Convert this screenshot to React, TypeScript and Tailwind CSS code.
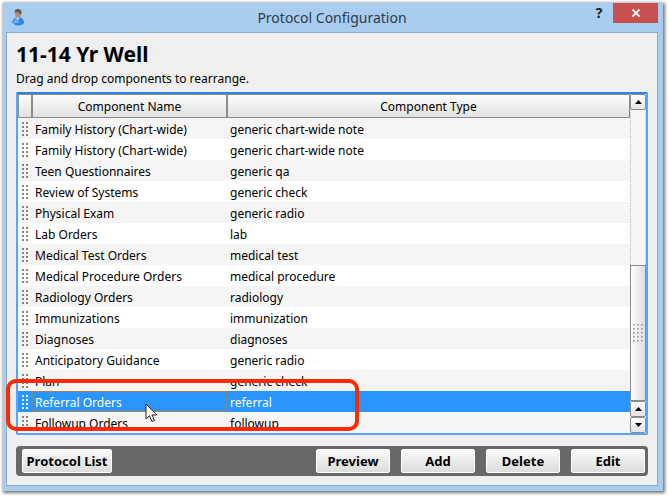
import React, { useState } from 'react';

interface ProtocolComponent {
  name: string;
  type: string;
}

const components: ProtocolComponent[] = [
  { name: 'Family History (Chart-wide)', type: 'generic chart-wide note' },
  { name: 'Family History (Chart-wide)', type: 'generic chart-wide note' },
  { name: 'Teen Questionnaires', type: 'generic qa' },
  { name: 'Review of Systems', type: 'generic check' },
  { name: 'Physical Exam', type: 'generic radio' },
  { name: 'Lab Orders', type: 'lab' },
  { name: 'Medical Test Orders', type: 'medical test' },
  { name: 'Medical Procedure Orders', type: 'medical procedure' },
  { name: 'Radiology Orders', type: 'radiology' },
  { name: 'Immunizations', type: 'immunization' },
  { name: 'Diagnoses', type: 'diagnoses' },
  { name: 'Anticipatory Guidance', type: 'generic radio' },
  { name: 'Plan', type: 'generic check' },
  { name: 'Referral Orders', type: 'referral' },
  { name: 'Followup Orders', type: 'followup' },
];

function UserIcon() {
  return (
    <svg width="15" height="17" viewBox="0 0 15 17" aria-hidden="true">
      <path d="M2 15 C2 11 4 9 8 8 C12 8 14 11 14 14 C13 16 9 17 5 16 Z" fill="#3484e0" />
      <path d="M3 14 C4 11 6 9 8 9 L9 14 Z" fill="#69b2f8" />
      <path d="M0 15 L3 14 L5 16 Z" fill="#b9d9f5" />
      <path d="M6 8 L10 8 L8 11 Z" fill="#dcebfa" />
      <ellipse cx="8" cy="5" rx="3" ry="4" fill="#b98f74" />
      <path d="M5 4 C4 1 6 0 8 0 C12 0 12 4 11 6 C10 4 8 3 6 3 Z" fill="#5f5c58" />
    </svg>
  );
}

function DragHandle({ selected }: { selected: boolean }) {
  return (
    <svg width="7" height="15" viewBox="0 0 7 15" className="mx-auto block" aria-hidden="true">
      {[0, 4, 8, 12].map(y =>
        [0, 4].map(x => (
          <rect key={`${x}-${y}`} x={x} y={y} width="2" height="2" fill={selected ? '#e8f3ff' : '#858578'} />
        ))
      )}
    </svg>
  );
}

function ScrollArrow({ down = false }: { down?: boolean }) {
  return (
    <button
      aria-label={down ? 'Scroll down' : 'Scroll up'}
      className="flex h-4 w-full shrink-0 items-center justify-center rounded-xs border border-[#8c8c8c] bg-linear-to-b from-white to-[#e4e4e4]"
    >
      <svg width="7" height="4" viewBox="0 0 7 4" aria-hidden="true">
        <path d={down ? 'M0 0 H7 L3.5 4 Z' : 'M0 4 H7 L3.5 0 Z'} fill="#000" />
      </svg>
    </button>
  );
}

function ScrollBar() {
  return (
    <div className="flex w-4 shrink-0 flex-col">
      <ScrollArrow />
      <div className="w-full flex-1 border-x border-dotted border-[#b8b8b8] bg-[#f5f5f5]" />
      <div className="flex h-[136px] w-full items-center justify-center border border-[#8c8c8c] bg-linear-to-r from-[#fdfdfd] to-[#dedede]">
        <svg width="11" height="18" viewBox="0 0 11 18" aria-hidden="true">
          {[0, 4, 8, 12, 16].map(y =>
            [0, 4, 8].map(x => <path key={`${x}-${y}`} d={`M${x} ${y} h2 v1 h-1 v1 h-1 z`} fill="#a8a8a8" />)
          )}
        </svg>
      </div>
      <ScrollArrow />
      <ScrollArrow down />
    </div>
  );
}

function BarButton({ children, wide = false }: { children: React.ReactNode; wide?: boolean }) {
  return (
    <button
      className={`h-6 rounded-xs border border-white bg-linear-to-b from-[#fafafa] to-[#dcdcdc] text-[13px] leading-5 font-bold ${
        wide ? 'w-[90px]' : 'w-[74px]'
      }`}
    >
      {children}
    </button>
  );
}

export default function App() {
  const [selected, setSelected] = useState(13);

  const headCell =
    'h-6 border border-[#8c8c8c] bg-linear-to-b from-[#fcfcfc] to-[#e2e2e2] p-0 pt-0.5 text-center font-normal';

  return (
    <div className="bg-white p-[3px] pr-[6px] pb-[6px] font-['Noto_Sans',sans-serif] text-xs leading-5 text-black">
      <div className="bg-[#a8cdf1] pr-[5px] pb-[5px] pl-[3px] shadow-[1px_1px_3px_1px_#777]">
        {/* Title bar */}
        <header className="flex h-[29px] items-start">
          <div className="flex w-20 pt-1.5 pl-1">
            <UserIcon />
          </div>
          <h1 className="flex-1 pt-[3px] text-center text-sm leading-6 text-[#2f3a48]">Protocol Configuration</h1>
          <div className="flex w-20 justify-end">
            <button aria-label="Help" className="h-5 w-7 text-sm font-bold text-[#1e1e1e]">
              ?
            </button>
            <button aria-label="Close" className="flex h-5 w-[45px] items-center justify-center bg-[#c75050]">
              <svg width="8" height="8" viewBox="0 0 8 8" aria-hidden="true">
                <path d="M0.5 0.5 L7.5 7.5 M7.5 0.5 L0.5 7.5" stroke="#fff" strokeWidth="1.8" />
              </svg>
            </button>
          </div>
        </header>

        <main className="border border-[#8aaccc] bg-[#efefef] px-[9px] pb-[9px]">
          <h2 className="pt-[7px] text-[21px] leading-7 font-bold">11-14 Yr Well</h2>
          <p className="pt-px pb-[3px]">Drag and drop components to rearrange.</p>

          <div className="relative">
            {/* Component list */}
            <div className="flex rounded-xs border-2 border-[#58a6fc] border-t-[#2c83dc]">
              <table className="flex-1 table-fixed border-separate border-spacing-0 bg-white">
                <colgroup>
                  <col className="w-[14px]" />
                  <col className="w-[195px]" />
                  <col />
                </colgroup>
                <thead>
                  <tr>
                    <th className={headCell} aria-label="Drag handle" />
                    <th className={headCell}>Component Name</th>
                    <th className={headCell}>Component Type</th>
                  </tr>
                </thead>
                <tbody>
                  {components.map((item, i) => {
                    const active = i === selected;
                    return (
                      <tr
                        key={i}
                        onClick={() => setSelected(i)}
                        className={`h-[21px] ${active ? 'bg-[#2a95ff] text-white' : 'odd:bg-[#f5f5f5]'}`}
                      >
                        <td className="p-0 pt-0.5">
                          <DragHandle selected={active} />
                        </td>
                        <td
                          className={`border border-dotted p-0 pt-0.5 pl-0.5 leading-[17px] ${
                            active ? 'border-[#c08040]' : 'border-transparent'
                          }`}
                        >
                          {item.name}
                        </td>
                        <td className="p-0 pt-0.5 pl-[3px] leading-[19px]">{item.type}</td>
                      </tr>
                    );
                  })}
                </tbody>
              </table>
              <ScrollBar />
            </div>

            {/* Highlight box and pointer over the list */}
            <div className="pointer-events-none absolute bottom-1 -left-2.5 h-[52px] w-[353px] rounded-[10px] border-4 border-[#ff2a00]" />
            <svg
              className="pointer-events-none absolute bottom-3 left-[129px]"
              width="13"
              height="20"
              viewBox="0 0 13 20"
              aria-hidden="true"
            >
              <path d="M1 1 V16 L4.5 12.8 L7 18.5 L9.5 17.5 L7 12 H11.8 Z" fill="#fff" stroke="#222" />
            </svg>
          </div>

          {/* Action bar */}
          <div className="mt-[11px] flex items-center gap-[11px] rounded-sm bg-[#686868] py-[3px] pr-[3px] pl-[6px]">
            <BarButton wide>Protocol List</BarButton>
            <div className="flex-1" />
            <BarButton>Preview</BarButton>
            <BarButton>Add</BarButton>
            <BarButton>Delete</BarButton>
            <BarButton>Edit</BarButton>
          </div>
        </main>
      </div>
    </div>
  );
}
